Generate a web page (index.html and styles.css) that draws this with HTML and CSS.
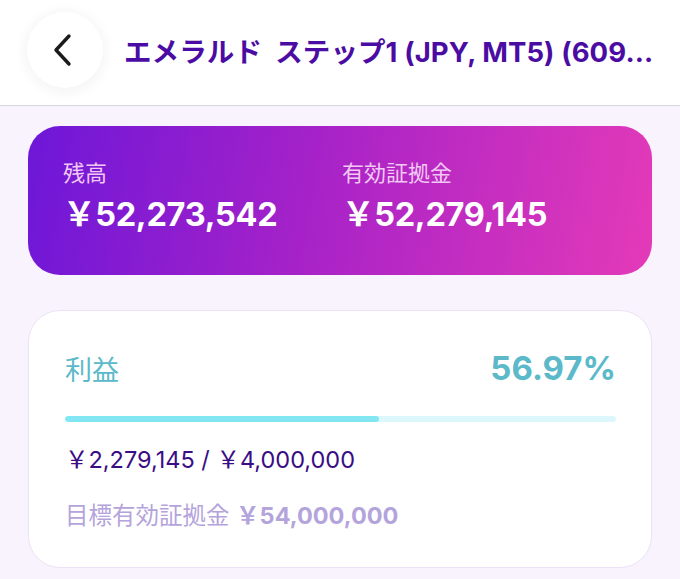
FILE: index.html
```html
<!DOCTYPE html>
<html lang="ja">
<head>
    <meta charset="UTF-8">
    <title>エメラルド ステップ1</title>
    <link rel="stylesheet" href="styles.css">
</head>
<body>
    <header class="top-bar">
        <button class="back-btn" aria-label="戻る">
            <svg width="24" height="36" viewBox="0 0 24 36">
                <path d="M18 4 L5 18 L18 32" fill="none" stroke="#1b1b1b" stroke-width="3.4" stroke-linecap="round" stroke-linejoin="round"/>
            </svg>
        </button>
        <h1 class="page-title">エメラルド&nbsp;&nbsp;ステップ1 (JPY, MT5) (609...</h1>
    </header>

    <main class="content">
        <!-- Balance card -->
        <section class="balance-card">
            <div class="balance-item">
                <div class="balance-label">残高</div>
                <div class="balance-value">￥52,273,542</div>
            </div>
            <div class="balance-item">
                <div class="balance-label">有効証拠金</div>
                <div class="balance-value">￥52,279,145</div>
            </div>
        </section>

        <!-- Profit target card -->
        <section class="profit-card">
            <div class="profit-head">
                <span class="profit-label">利益</span>
                <span class="profit-percent">56.97%</span>
            </div>
            <div class="progress">
                <div class="progress-fill" style="width: 56.97%"></div>
            </div>
            <div class="profit-amount">￥2,279,145 / ￥4,000,000</div>
            <div class="profit-target">目標有効証拠金 <strong>￥54,000,000</strong></div>
        </section>
    </main>
</body>
</html>
```

FILE: styles.css
```css
body {
    margin: 0;
    background: #f9f3fe;
    font-family: "Inter", "Noto Sans CJK JP", sans-serif;
    width: 680px;
}

.top-bar {
    display: flex;
    align-items: center;
    background: #ffffff;
    padding: 12px 0 17px 27px;
    border-bottom: 1px solid #dad6de;
}

.back-btn {
    width: 76px;
    height: 76px;
    border-radius: 50%;
    border: none;
    background: #ffffff;
    box-shadow: 0 2px 14px rgba(60, 40, 90, 0.08);
    display: flex;
    align-items: center;
    justify-content: center;
    padding: 0 4px 0 0;
    flex-shrink: 0;
}

.page-title {
    margin: 0 0 0 21px;
    font-size: 27.5px;
    font-weight: 700;
    color: #4b0ca3;
    white-space: nowrap;
    letter-spacing: 0.1px;
}

.content {
    padding: 20px 28px;
}

.balance-card {
    display: grid;
    grid-template-columns: 279px auto;
    padding: 32px 35px 39px;
    border-radius: 32px;
    background: linear-gradient(100deg, #6d17d8 0%, #a622c8 45%, #e43ab8 100%);
    color: #ffffff;
}

.balance-label {
    font-size: 22px;
    color: #f1c9f4;
    line-height: 30px;
}

.balance-value {
    margin-top: 6px;
    font-size: 32.5px;
    font-weight: 700;
    line-height: 42px;
    letter-spacing: -0.3px;
}

.profit-card {
    margin-top: 35px;
    background: #ffffff;
    border: 1px solid #ece2f6;
    border-radius: 32px;
    padding: 37px 35px 36px 36px;
}

.profit-head {
    display: flex;
    justify-content: space-between;
    align-items: center;
    color: #5bb9c9;
}

.profit-label {
    font-size: 27px;
}

.profit-percent {
    font-size: 33px;
    font-weight: 700;
}

.progress {
    margin-top: 28px;
    height: 6px;
    border-radius: 3px;
    background: #dcf8fc;
    overflow: hidden;
}

.progress-fill {
    height: 100%;
    border-radius: 3px;
    background: #82e6f3;
}

.profit-amount {
    margin-top: 19px;
    font-size: 23.5px;
    color: #3a0d86;
}

.profit-target {
    margin-top: 22px;
    font-size: 23.5px;
    color: #b4a4dc;
}

.profit-target strong {
    font-weight: 700;
}
```
